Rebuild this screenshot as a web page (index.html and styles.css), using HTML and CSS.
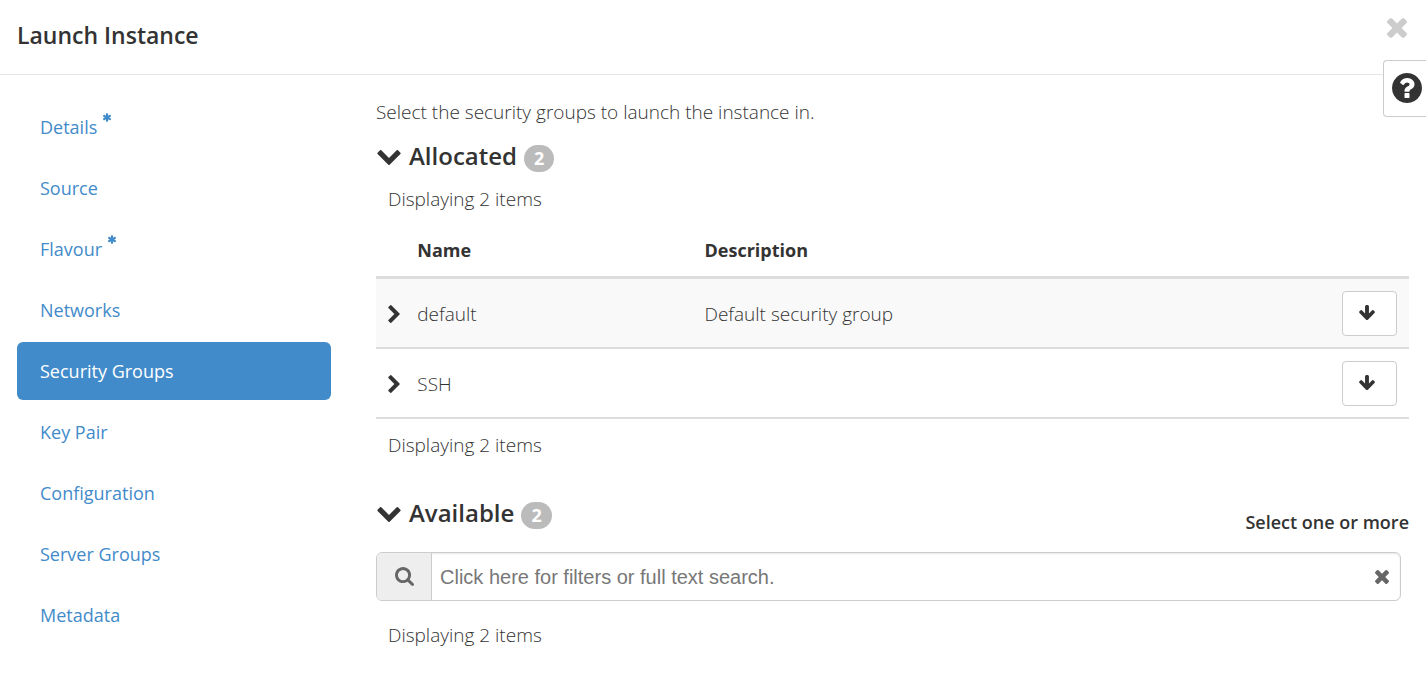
FILE: index.html
```html
<!DOCTYPE html>
<html lang="en">
<head>
<meta charset="utf-8">
<meta name="viewport" content="width=device-width, initial-scale=1">
<title>Launch Instance</title>
<link rel="stylesheet" href="styles.css">
</head>
<body>
<svg class="sprite" aria-hidden="true">
  <symbol id="times" viewBox="302 366 1188 1188"><path d="M1490 1322q0 40-28 68l-136 136q-28 28-68 28t-68-28l-294-294-294 294q-28 28-68 28t-68-28l-136-136q-28-28-28-68t28-68l294-294-294-294q-28-28-28-68t28-68l136-136q28-28 68-28t68 28l294 294 294-294q28-28 68-28t68 28l136 136q28 28 28 68t-28 68l-294 294 294 294q28 28 28 68z"/></symbol>
  <symbol id="question" viewBox="128 128 1536 1536"><path d="M1024 1376v-192q0-14-9-23t-23-9h-192q-14 0-23 9t-9 23v192q0 14 9 23t23 9h192q14 0 23-9t9-23zm256-672q0-88-55.5-163t-138.5-116-170-41q-243 0-371 213-15 24 8 42l132 100q7 6 19 6 16 0 25-12 53-68 86-92 34-24 86-24 48 0 85.5 26t37.5 59q0 38-20 61t-68 45q-63 28-115.5 86.5t-52.5 125.5v36q0 14 9 23t23 9h192q14 0 23-9t9-23q0-19 21.5-49.5t54.5-49.5q32-18 49-28.5t46-35 44.5-48 28-60.5 12.5-81zm384 192q0 209-103 385.5t-279.5 279.5-385.5 103-385.5-103-279.5-279.5-103-385.5 103-385.5 279.5-279.5 385.5-103 385.5 103 279.5 279.5 103 385.5z"/></symbol>
  <symbol id="search" viewBox="64 128 1664 1664"><path d="M1216 832q0-185-131.5-316.5t-316.5-131.5-316.5 131.5-131.5 316.5 131.5 316.5 316.5 131.5 316.5-131.5 131.5-316.5zm512 832q0 52-38 90t-90 38q-54 0-90-38l-343-342q-179 124-399 124-143 0-273.5-55.5t-225-150-150-225-55.5-273.5 55.5-273.5 150-225 225-150 273.5-55.5 273.5 55.5 225 150 150 225 55.5 273.5q0 220-124 399l343 343q37 37 37 90z"/></symbol>
  <symbol id="chevron-down" viewBox="90 533 1612 1035"><path d="M1683 808l-742 741q-19 19-45 19t-45-19l-742-741q-19-19-19-45.5t19-45.5l166-165q19-19 45-19t45 19l531 531 531-531q19-19 45-19t45 19l166 165q19 19 19 45.5t-19 45.5z"/></symbol>
  <symbol id="chevron-right" viewBox="346 26 1036 1612"><path d="M1363 877l-742 742q-19 19-45 19t-45-19l-166-166q-19-19-19-45t19-45l531-531-531-531q-19-19-19-45t19-45l166-166q19-19 45-19t45 19l742 742q19 19 19 45t-19 45z"/></symbol>
  <symbol id="arrow-down" viewBox="117 128 1558 1483"><path d="M1675 832q0 53-37 90l-651 652q-39 37-91 37-53 0-90-37l-651-652q-38-36-38-90 0-53 38-91l74-75q39-37 91-37 53 0 90 37l294 294v-704q0-52 38-90t90-38h128q52 0 90 38t38 90v704l294-294q37-37 90-37 52 0 91 37l75 75q37 39 37 91z"/></symbol>
  <symbol id="asterisk" viewBox="180 128 1432 1536"><path d="M1546 1050q46 26 59.5 77.5t-12.5 97.5l-64 110q-26 46-77.5 59.5t-97.5-12.5l-266-153v307q0 52-38 90t-90 38h-128q-52 0-90-38t-38-90v-307l-266 153q-46 26-97.5 12.5t-77.5-59.5l-64-110q-26-46-12.5-97.5t59.5-77.5l266-154-266-154q-46-26-59.5-77.5t12.5-97.5l64-110q26-46 77.5-59.5t97.5 12.5l266 153v-307q0-52 38-90t90-38h128q52 0 90 38t38 90v307l266-153q46-26 97.5-12.5t77.5 59.5l64 110q26 46 12.5 97.5t-59.5 77.5l-266 154z"/></symbol>
</svg>

<header class="header">
  <h1 class="title">Launch Instance</h1>
  <button class="close" type="button" aria-label="Close"><svg class="icon-close"><use href="#times"/></svg></button>
</header>
<button class="help" type="button" aria-label="Help"><svg class="icon-help"><use href="#question"/></svg></button>

<div class="wizard">
  <nav class="steps" aria-label="Steps">
    <a class="step" href="#details">Details <svg class="required"><use href="#asterisk"/></svg></a>
    <a class="step" href="#source">Source</a>
    <a class="step" href="#flavour">Flavour <svg class="required"><use href="#asterisk"/></svg></a>
    <a class="step" href="#networks">Networks</a>
    <a class="step active" href="#security-groups" aria-current="step">Security Groups</a>
    <a class="step" href="#key-pair">Key Pair</a>
    <a class="step" href="#configuration">Configuration</a>
    <a class="step" href="#server-groups">Server Groups</a>
    <a class="step" href="#metadata">Metadata</a>
  </nav>

  <main class="content">
    <p class="intro">Select the security groups to launch the instance in.</p>

    <section class="allocated">
      <div class="section-head">
        <h2 class="section-title"><button class="toggle" type="button" aria-expanded="true"><svg class="icon-down"><use href="#chevron-down"/></svg>Allocated</button></h2>
        <span class="badge">2</span>
      </div>
      <p class="count">Displaying 2 items</p>
      <table class="groups">
        <thead>
          <tr><th class="col-expand"></th><th class="col-name" scope="col">Name</th><th scope="col">Description</th><th class="col-action"></th></tr>
        </thead>
        <tbody>
          <tr>
            <td><button class="expand" type="button" aria-label="Expand default"><svg class="icon-right"><use href="#chevron-right"/></svg></button></td>
            <td>default</td>
            <td>Default security group</td>
            <td><button class="move" type="button" aria-label="Remove default"><svg class="icon-arrow"><use href="#arrow-down"/></svg></button></td>
          </tr>
          <tr>
            <td><button class="expand" type="button" aria-label="Expand SSH"><svg class="icon-right"><use href="#chevron-right"/></svg></button></td>
            <td>SSH</td>
            <td></td>
            <td><button class="move" type="button" aria-label="Remove SSH"><svg class="icon-arrow"><use href="#arrow-down"/></svg></button></td>
          </tr>
        </tbody>
      </table>
      <p class="count">Displaying 2 items</p>
    </section>

    <section class="available">
      <div class="section-head">
        <h2 class="section-title"><button class="toggle" type="button" aria-expanded="true"><svg class="icon-down"><use href="#chevron-down"/></svg>Available</button></h2>
        <span class="badge">2</span>
        <span class="hint">Select one or more</span>
      </div>
      <div class="search">
        <label class="search-addon" for="filter" aria-label="Search"><svg class="icon-search"><use href="#search"/></svg></label>
        <input class="search-input" id="filter" type="text" placeholder="Click here for filters or full text search.">
        <button class="clear" type="button" aria-label="Clear search"><svg class="icon-clear"><use href="#times"/></svg></button>
      </div>
      <p class="count">Displaying 2 items</p>
    </section>
  </main>
</div>
</body>
</html>
```
FILE: styles.css
```css
* { box-sizing: border-box; }

body {
  margin: 0;
  background: #fff;
  color: #333;
  font: 300 19px/28px "Open Sans", "Noto Sans", sans-serif;
}

h1, h2, p { margin: 0; }

button {
  padding: 0;
  border: 0;
  background: none;
  color: inherit;
  font: inherit;
  cursor: pointer;
}

svg { display: block; fill: currentColor; }

.sprite { position: absolute; width: 0; height: 0; }

.header {
  display: flex;
  justify-content: space-between;
  align-items: flex-start;
  padding: 18px 19px 22px 17px;
  border-bottom: 1px solid #e5e5e5;
}

.title { font-size: 23px; line-height: 34px; font-weight: 600; }
.close { color: #ccc; }
.icon-close { width: 20px; height: 20px; }

/* Sits over the header rule, against the window edge */
.help {
  position: absolute;
  top: 60px;
  right: 0;
  padding: 12px 4px 13px 8px;
  border: 1px solid #ccc;
  border-right: 0;
  border-radius: 4px 0 0 4px;
  background: #fff;
}
.icon-help { width: 30px; height: 30px; }

.wizard {
  display: grid;
  grid-template-columns: minmax(200px, 314px) minmax(0, 1fr);
  align-items: start;
  gap: 45px;
  padding: 23px 17px;
}

.steps { display: flex; flex-direction: column; gap: 3px; }

.step {
  display: flex;
  gap: 6px;
  padding: 15px 23px;
  border-radius: 6px;
  color: #428bca;
  font-size: 18px;
  font-weight: 400;
  text-decoration: none;
}
.step.active { background: #428bca; color: #fff; }
.required { width: 8px; height: 9px; }

.section-head { display: flex; align-items: center; }
.allocated .section-head { padding: 13px 0 12px; }
.available .section-head { padding: 37px 0 22px; }

.section-title { font-size: 24px; line-height: 34px; font-weight: 600; }
.toggle { display: flex; align-items: center; gap: 8px; padding-left: 1px; }
.icon-down { width: 24px; height: 15px; margin-top: 2px; }

.badge {
  margin: 5px 0 0 7px;
  padding: 0 10px;
  border-radius: 14px;
  background: #bbb;
  color: #fff;
  font-size: 18px;
  line-height: 27px;
  font-weight: 700;
}

.hint {
  margin: 12px 0 -6px auto;
  font-size: 18px;
  font-weight: 600;
}
.count { padding: 0 12px; }

.groups {
  width: 100%;
  margin: 12px 0;
  border-spacing: 0;
  table-layout: fixed;
}
.groups th {
  padding: 11px 12px 12px 0;
  border-bottom: 3px solid #ddd;
  font-size: 18px;
  font-weight: 700;
  text-align: left;
}
.groups td {
  padding: 12px 12px 11px 0;
  border-bottom: 2px solid #ddd;
}
.groups tbody tr:nth-child(odd) { background: #f9f9f9; }
.col-expand { width: 4%; }
.col-name { width: 27.8%; }
.groups .col-action { width: 67px; }

.expand { display: block; margin-left: 12px; }
.icon-right { width: 12px; height: 18px; }

.move {
  display: flex;
  justify-content: center;
  width: 55px;
  height: 45px;
  padding: 13px 5px 0 0;
  border: 1px solid #ccc;
  border-radius: 4px;
  background: #fff;
}
.icon-arrow { width: 16px; height: 15px; }

.search {
  display: flex;
  align-items: stretch;
  height: 49px;
  margin: 0 8px 20px 0;
  border: 1px solid #ccc;
  border-radius: 6px;
  box-shadow: inset 0 1px 2px rgba(0, 0, 0, .1);
  overflow: hidden;
}
.search-addon {
  display: flex;
  align-items: center;
  padding: 0 17px 0 18px;
  border-right: 1px solid #ccc;
  background: #eee;
  color: #666;
}
.icon-search { width: 19px; height: 19px; }
.search-input {
  flex: 1;
  min-width: 0;
  padding: 2px 8px 0;
  border: 0;
  outline: 0;
  background: transparent;
  color: #333;
  font: 20px "Liberation Sans", Arial, sans-serif;
}
.search-input::placeholder { color: #777; }
.clear { padding: 0 11px; color: #666; }
.icon-clear { width: 14px; height: 14px; }
```
